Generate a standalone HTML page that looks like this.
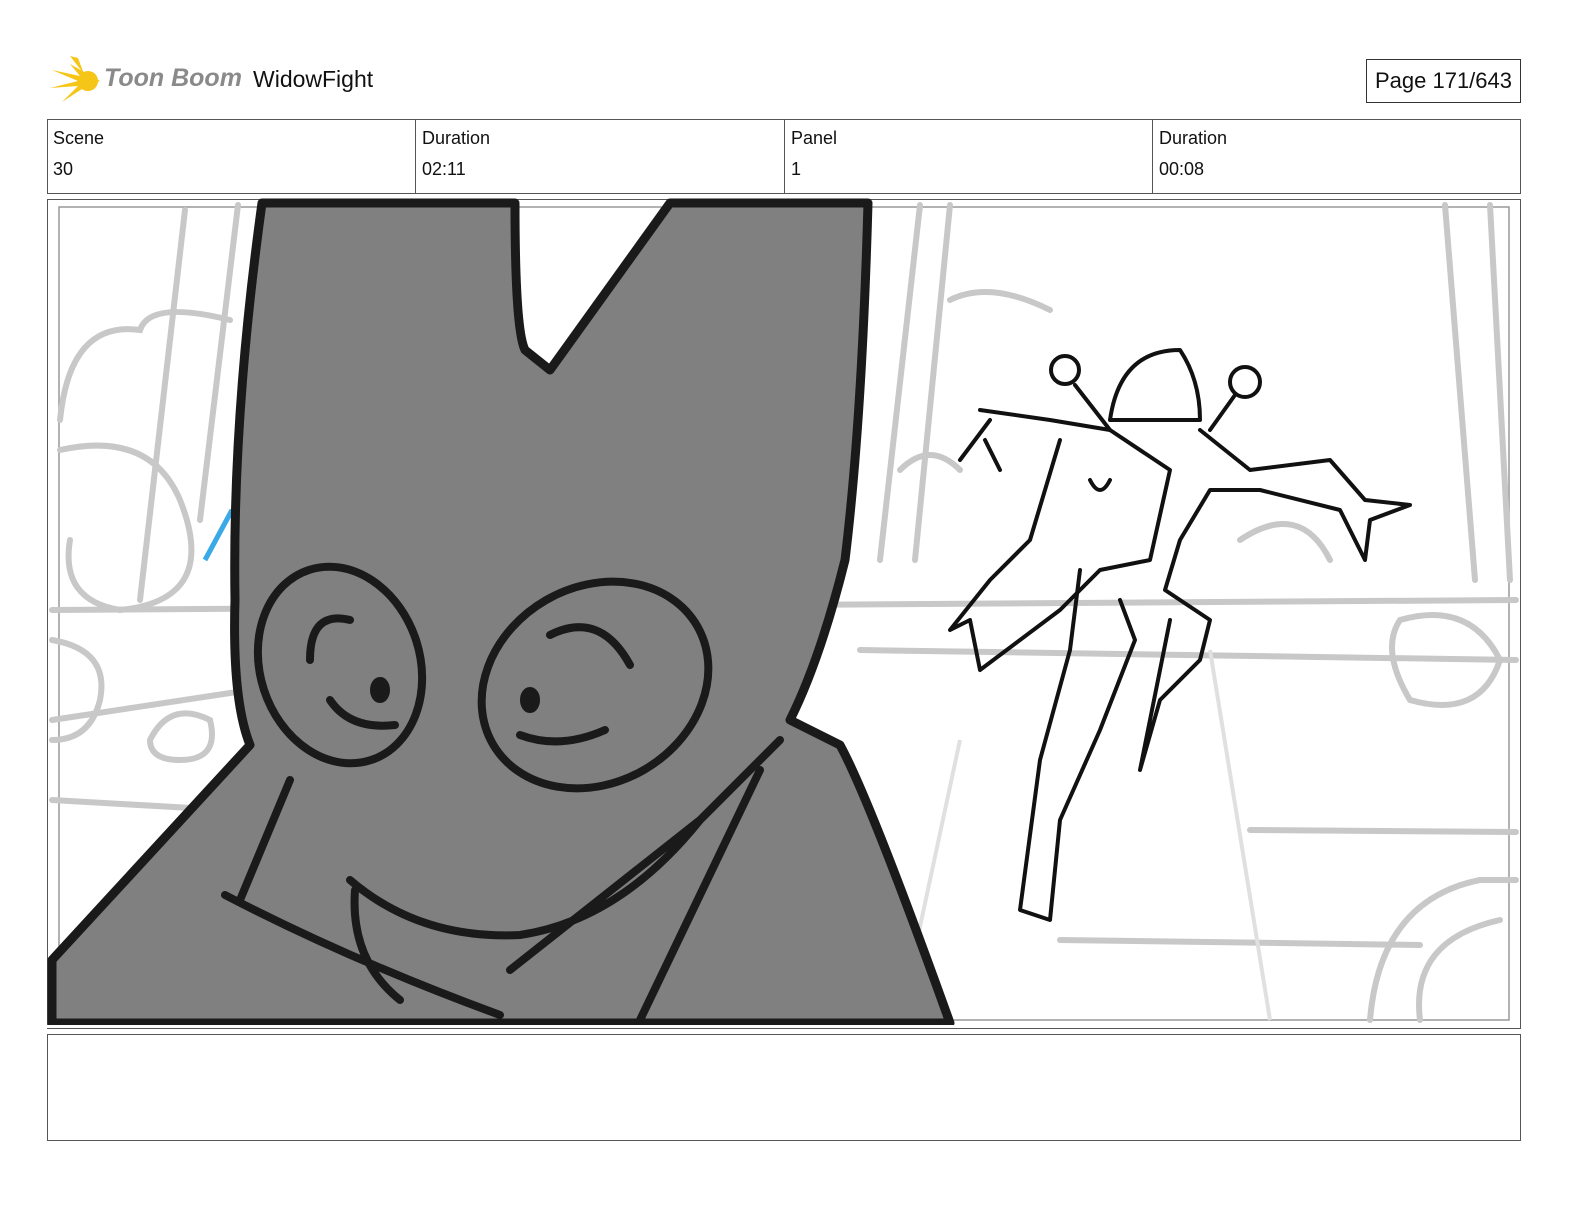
<!DOCTYPE html>
<html><head><meta charset="utf-8"><style>
body{margin:0;width:1584px;height:1224px;background:#fff;position:relative;font-family:"Segoe UI","Liberation Sans",sans-serif;overflow:hidden}
.a{position:absolute}
.cell{position:absolute;top:120px;height:73px;border-left:1px solid #555;font-size:18px;color:#111}
.cell div{position:absolute;left:6px}
</style></head><body>
<svg class="a" style="left:50px;top:56px" width="52" height="50" viewBox="0 0 52 50">
<g fill="#f5c518"><path d="M50 25 L20 8 L30 20 L2 14 L28 25 L0 32 L28 30 L12 46 L32 33 L50 25Z"/><path d="M20 0 L34 18 L28 2Z"/><circle cx="38" cy="25" r="10"/></g></svg>
<div class="a" style="left:104px;top:64px;font:italic bold 25px 'Liberation Sans',sans-serif;color:#8a8a8a">Toon Boom</div>
<div class="a" style="left:253px;top:66px;font-size:23px;color:#111">WidowFight</div>
<div class="a" style="left:1366px;top:59px;width:155px;height:44px;border:1px solid #333;box-sizing:border-box;font-size:22px;line-height:42px;text-align:center;color:#111">Page 171/643</div>
<div class="a" style="left:47px;top:119px;width:1474px;height:75px;border:1px solid #555;box-sizing:border-box"></div>
<div class="cell" style="left:47px;border-left:none"><div style="top:8px">Scene</div><div style="top:39px">30</div></div>
<div class="cell" style="left:415px"><div style="top:8px">Duration</div><div style="top:39px">02:11</div></div>
<div class="cell" style="left:784px"><div style="top:8px">Panel</div><div style="top:39px">1</div></div>
<div class="cell" style="left:1152px"><div style="top:8px">Duration</div><div style="top:39px">00:08</div></div>
<div class="a" style="left:47px;top:199px;width:1474px;height:830px;border:1px solid #555;box-sizing:border-box"></div>
<svg class="a" style="left:0;top:0" width="1584" height="1224">
<rect x="59" y="207" width="1450" height="813" fill="none" stroke="#999" stroke-width="1.5"/>
<g fill="none" stroke="#c8c8c8" stroke-width="6" stroke-linecap="round">
<path d="M185 210 L140 600 M238 205 L200 520 M920 205 L880 560 M950 205 L915 560 M1445 205 L1475 580 M1490 205 L1510 580"/>
<path d="M52 610 L1516 600 M52 720 L250 690 M52 800 L400 820 M860 650 L1516 660 M1250 830 L1516 832 M1060 940 L1420 945"/>
<path d="M60 420 Q70 320 140 330 Q150 300 230 320 M60 450 Q150 430 180 500 Q220 600 120 610 Q60 600 70 540"/>
<path d="M950 300 Q990 280 1050 310 M900 470 Q930 440 960 470 M1240 540 Q1300 500 1330 560 M1400 620 Q1470 600 1500 660 Q1480 720 1410 700 Q1380 650 1400 620"/>
<path d="M1370 1020 Q1380 900 1480 880 L1516 880 M1420 1020 Q1410 940 1500 920"/>
<path d="M52 640 Q110 650 100 700 Q90 740 52 740"/>
<path d="M150 740 Q170 700 210 720 Q220 760 180 760 Q150 760 150 740"/>
</g>
<g fill="none" stroke="#e0e0e0" stroke-width="4"><path d="M1210 650 L1270 1020 M960 740 L900 1020"/></g>
<path d="M205 560 L232 510" stroke="#3aa9e8" stroke-width="5"/>
<path d="M52 1023 L52 960 L250 745 Q232 700 235 600 Q232 420 262 203 L515 203 Q515 330 525 350 L550 370 L670 203 L868 203 Q862 420 845 560 Q820 660 790 720 L840 745 Q870 800 950 1023 Z" fill="#808080" stroke="#1a1a1a" stroke-width="9" stroke-linejoin="round"/>
<rect x="45" y="1025" width="920" height="3" fill="#fff"/>
<g fill="none" stroke="#1a1a1a" stroke-width="8" stroke-linecap="round">
<ellipse cx="340" cy="665" rx="80" ry="100" transform="rotate(-18 340 665)"/>
<ellipse cx="595" cy="685" rx="118" ry="98" transform="rotate(-30 595 685)"/>
<path d="M310 660 Q310 610 350 620 M330 700 Q350 730 395 725 M520 735 Q560 750 605 730 M550 635 Q600 610 630 665"/>
<path d="M290 780 L240 900 M225 895 Q350 960 500 1015 M355 890 Q350 960 400 1000 M350 880 Q420 940 520 935 Q620 920 700 820 L780 740 M760 770 L640 1020 M700 820 L510 970"/>
<ellipse cx="380" cy="690" rx="6" ry="9" fill="#1a1a1a"/><ellipse cx="530" cy="700" rx="6" ry="9" fill="#1a1a1a"/>
</g>
<g fill="none" stroke="#111" stroke-width="4" stroke-linecap="round" stroke-linejoin="round">
<path d="M1110 420 Q1120 350 1180 350 Q1200 380 1200 420 Z"/>
<circle cx="1065" cy="370" r="14"/><circle cx="1245" cy="382" r="15"/>
<path d="M1075 385 L1110 430 M1235 395 L1210 430"/>
<path d="M980 410 L1050 420 L1110 430 L1170 470 L1150 560 L1100 570 L1060 610 L980 670 L970 620 L950 630 L990 580 L1030 540 L1060 440"/>
<path d="M1200 430 L1250 470 L1330 460 L1365 500 L1410 505 L1370 520 L1365 560 L1340 510 L1260 490 L1210 490 L1180 540 L1165 590 L1210 620 L1200 660 L1160 700 L1140 770 L1150 720 L1170 620"/>
<path d="M1080 570 L1070 650 L1040 760 L1020 910 L1050 920 L1060 820 L1100 730 L1135 640 L1120 600"/>
<path d="M990 420 L960 460 M985 440 L1000 470 M1090 480 Q1100 500 1110 480"/>
</g>
</svg>
<div class="a" style="left:47px;top:1034px;width:1474px;height:107px;border:1px solid #555;box-sizing:border-box"></div>
</body></html>
